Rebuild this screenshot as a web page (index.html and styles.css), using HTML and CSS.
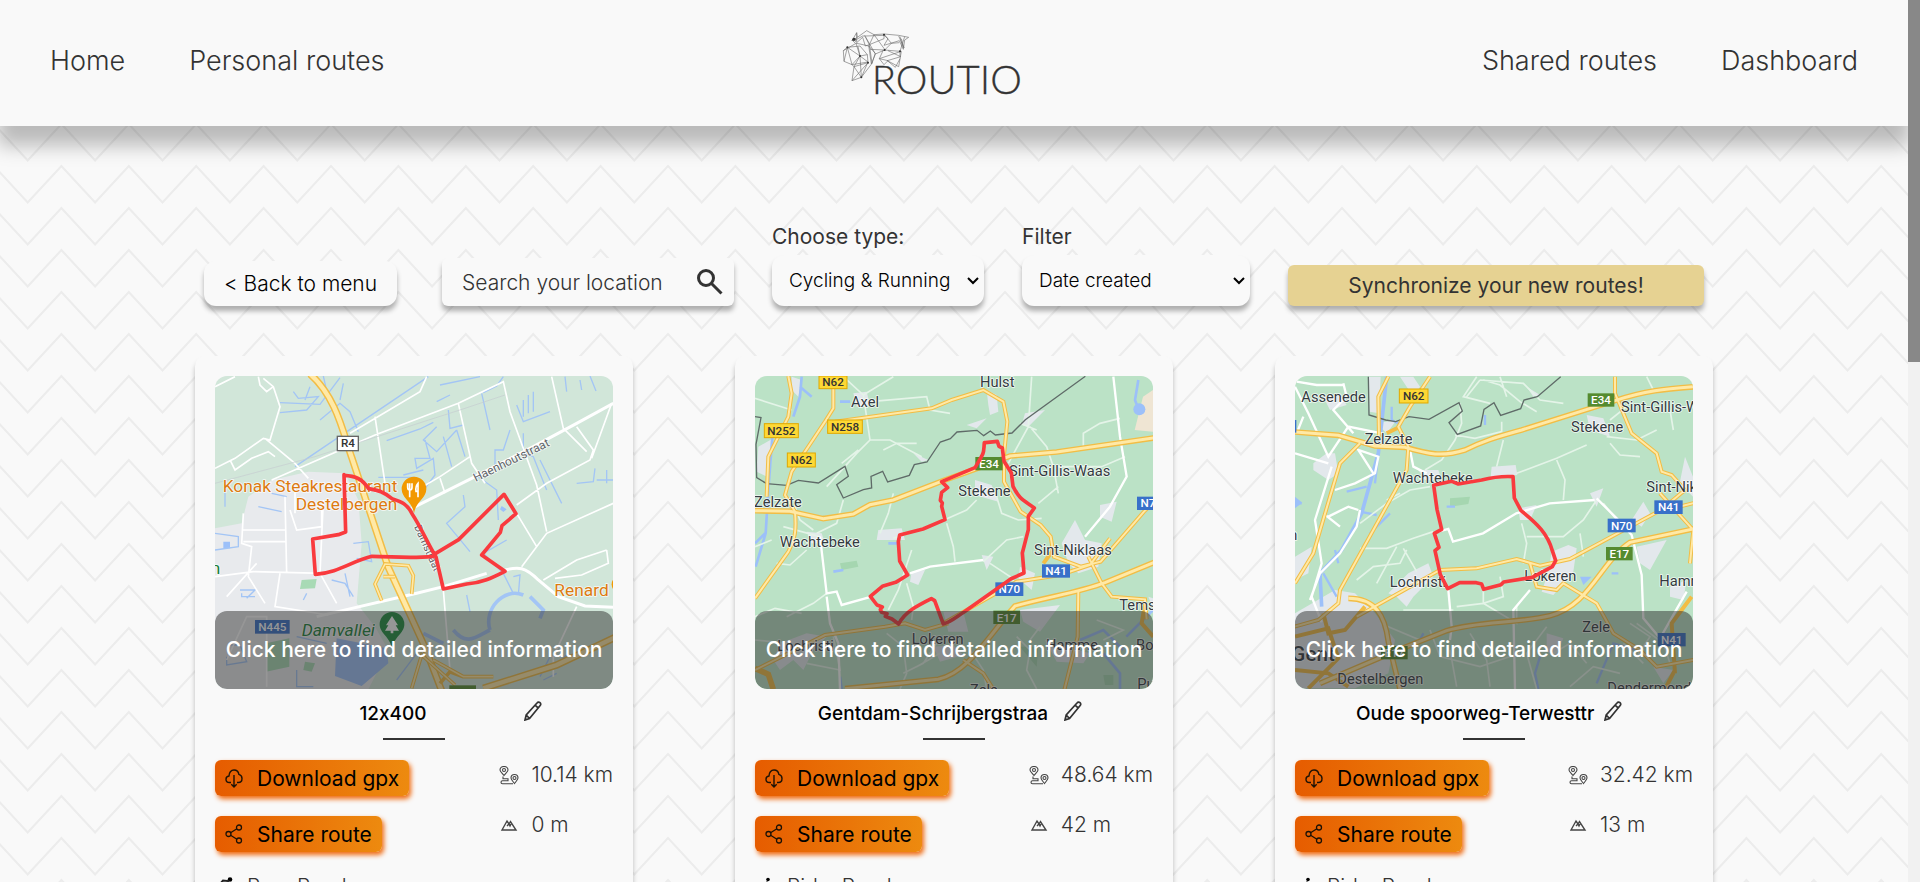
FILE: index.html
```html
<!DOCTYPE html>
<html lang="en">
<head>
<meta charset="utf-8">
<title>Routio</title>
<meta name="viewport" content="width=device-width, initial-scale=1">
<link rel="stylesheet" href="styles.css">
</head>
<body>
<svg class="sprite" aria-hidden="true">
  <symbol id="i-pencil" viewBox="0 0 18 20"><path d="M1 19l1.200-5L13 2c1-1.200 2-1.200 3-.3s1 2 0 3L5.500 17.500zM11 4.200l3.300 2.800M2.200 14l3.300 3.500" fill="none" stroke="#333" stroke-width="1.700"/></symbol>
  <symbol id="i-download" viewBox="0 0 18 19"><path d="M6 13.500H4.500C2.500 13.500 1 12 1 10.200s1.300-3 3-3.200C4 3.500 6 1 9 1c2.800 0 4.500 1.800 4.900 4.400C16 6 17 7.500 17 9.500c0 2.300-1.300 4-3.500 4H12M9 6v12M6.300 15.300L9 18l2.700-2.700" fill="none" stroke="#1d1206" stroke-width="1.400"/></symbol>
  <symbol id="i-share" viewBox="0 0 18 20"><g fill="none" stroke="#1d1206" stroke-width="1.300"><circle cx="3.500" cy="10" r="2.500"/><circle cx="14" cy="3.500" r="2.500"/><circle cx="14" cy="16.500" r="2.500"/><path d="M5.600 8.700l6.300-3.900M5.600 11.300l6.300 3.900"/></g></symbol>
  <symbol id="i-distance" viewBox="0 0 20 19"><g fill="none" stroke="#444" stroke-width="1.100"><path d="M5 9.500C3 7 1 5.500 1 4a4 3.500 0 0 1 8 0c0 1.500-2 3-4 5.500zM15.500 17.500c-2-2.500-3.500-4-3.500-5.500a3.500 3.500 0 0 1 7 0c0 1.500-1.500 3-3.500 5.500z"/><circle cx="5" cy="4" r="1.500"/><circle cx="15.500" cy="12" r="1.500"/><path d="M4 10.500v2.200h5v2H3.500c-2 0-2 3 0 3H14"/></g></symbol>
  <symbol id="i-climb" viewBox="0 0 16 12"><path d="M1 11L6 2l2 3 1.500-2.500L15 11zM6 7l2-2 1 2 1-2" fill="none" stroke="#444" stroke-width="1.400"/></symbol>
  <symbol id="i-run" viewBox="0 0 18 20"><circle cx="13" cy="2.500" r="2.300"/><path d="M3 7l3-3.500 5 .5-3 6 3 3-1 6M8 10l-2 4-5 1M11 5l2 3h4" fill="none" stroke="#222" stroke-width="2"/></symbol>
  <symbol id="i-ride" viewBox="0 0 18 20"><circle cx="11" cy="2.500" r="1.800"/><g fill="none" stroke="#222" stroke-width="1.400"><circle cx="4" cy="15" r="3.300"/><circle cx="14" cy="15" r="3.300"/><path d="M9 15v-4L6 9l4-4 2 3h3"/></g></symbol>
</svg>
<div class="page">
  <header class="header">
    <nav class="nav"><a href="#">Home</a><a href="#">Personal routes</a></nav>
    <a class="logo" href="#" aria-label="Routio">
      <svg viewBox="118 86 549 198" width="183" height="66">
        <g fill="none" stroke="#666" stroke-width="1.800">
          <path d="M148 118l14-24 2 14 28-20 22 12 30-2 44 4 30 6-12 8-4 28-12-26-46 14 12-20-12-10-54 2-10 0-18 10-6 10-8-8zM162 94v30M164 108l-16 10M180 108l8 26M162 124l18-16M214 100l32 44M186 102l14 28 44-18 0-14M188 134l12-4 2 14 44 2M202 130l-14-24M200 130l14-30M244 98l22 28-20 20M266 126l24-2M246 146l46 4 14-44M246 146l-28 12-16-28M218 158l-12 30-8-56M288 104l16 36-8-28M292 106l8 30M242 146l-12 26 14 18 12-12-26-6M230 172l66-22-8 46-34-18 40-12-38-18M254 178l24 20 14-26M292 150l0 16"/>
          <path d="M160 126l-38 22 2 32 24 10 6 6-6 42 28-10 32-42 10-30-20-22-26-6zM134 138l38 26-24 26M122 148l12-10 38-4 22 26-22 4-12-38M134 138l14 52M124 180l10-42M154 196l18-32-6-28M154 196l22 32-4-64 24 18-20 46M154 196l42-12-2-24M196 184l-48 54M148 190l48-8M202 144l6 42"/>
        </g>
        <g fill="#333"><circle cx="134" cy="138" r="3"/><circle cx="172" cy="164" r="3"/><circle cx="246" cy="146" r="3"/><circle cx="196" cy="184" r="3"/><circle cx="176" cy="228" r="3"/><circle cx="154" cy="114" r="5"/><circle cx="292" cy="150" r="3"/><circle cx="244" cy="100" r="3"/></g>
        <text class="logo-text" x="207" y="279">ROUTIO</text>
      </svg>
    </a>
    <nav class="nav"><a href="#">Shared routes</a><a href="#">Dashboard</a></nav>
  </header>
  <main class="main">
    <form class="toolbar">
      <button class="back" type="button">&lt; Back to menu</button>
      <div class="search">
        <input type="text" placeholder="Search your location" aria-label="Search your location">
        <button type="button" aria-label="Search"><svg viewBox="0 0 26 26" width="26" height="26"><g fill="none" stroke="#333" stroke-width="3"><circle cx="9" cy="9" r="7.500"/><path d="M14.500 14.500l10 10"/></g></svg></button>
      </div>
      <div class="field type"><label for="type">Choose type:</label><select id="type"><option>Cycling &amp; Running</option><option>Cycling</option><option>Running</option></select></div>
      <div class="field filter"><label for="filter">Filter</label><select id="filter"><option>Date created</option><option>Distance</option></select></div>
      <button class="sync" type="button">Synchronize your new routes!</button>
    </form>
    <div class="cards">
      <article class="card">
        <a class="map" href="#">
          <svg viewBox="75 78 1194 940" preserveAspectRatio="xMidYMid slice">
            <rect x="75" y="78" width="1194" height="940" fill="#d1e6d9"/>
            <path d="M75 535l80-15 20-80 70-50 110-25 110 5 40 80 10 130-15 180 55 70 40 70-60 118H75z" fill="#e8eaed"/>
            <path d="M335 690l45-3-5 28-45 2zM228 880l70-15v85l-70 15zM345 935l30 5-10 25-25-5z" fill="#a8dab5"/>
            <path d="M440 865l150 30 5 45-80 68-80-30zM100 575h20v20h-20zM935 468l15 10-10 8-10-8z" fill="#9cc0f9"/>
            <g fill="none" stroke="#a3c5f5" stroke-width="4">
              <path d="M270 188l80-8 35-40-60 5-15-20M270 158l120 5 60-80M360 110l-15 40M390 210l60-50 30 25 25 60M460 100l-10 50M400 78l18 80M315 350l400-270M590 272l100-35 40-20M705 270l15 55-45 0 5 30 50-30 5 50-30 40M640 375l60-15M565 382l110 0M740 230l-40 40 40 35 60-65M760 260l25 90M800 240l25 80M750 105l120-25M740 155l40-20M775 180l5 55 40-10M875 130l25 110M880 128l40-20 20-28M1000 150v50M1015 135v55M1030 125v60M980 165l20 50 80-30M960 240l-20 60-25 0 0 50M1000 250l0 60 30 10 40 100M1050 330l40 80 25 50M1125 80l5 45M1170 90l5 30M1200 78l18 45M850 370l70 50 5 90M820 435l5 35-55 50 70 85M1160 400l50-5 5-40M1250 360l0 40M1220 390l50 0M950 570l-70 40 60 60 30 60M490 580l45-5 10 60-45-10M105 410l0 60M205 470l70 15M290 440l-45-10M75 550l70 10 0 30-70 10M155 730v10h40M150 720h45l-25 25M350 730l-10 20M425 690l40 10 25 40M465 670l15 70M970 680l20-5-5 60M830 735l10 50M120 885l30 0 20 50-60 10 0-25M1050 980l30-60M1080 960l50-45M1060 990l40-20M320 860l90 20M320 960v50h50M620 990l60-80"/>
              <path d="M900 840c-20-60 40-130 100-105M1020 740l40 40-10 25M700 850l60 30M790 840c40 50 70 20 110 0" stroke-width="11"/>
            </g>
            <g fill="none" stroke="#fff" stroke-width="5">
              <path d="M75 355l60-30 85-60 20 5 30-100-20-60-30-25M75 110l60-30M205 80l5 25 20 20 20-15M120 330l15 30 50-35 50-20 20 15M225 265l90 75 40 45M245 390l310-135 250-95 135-65M480 250l210-125 20-45M555 200l30 200M805 160l40 180 40 60M805 160l135-65 20 90 80 220 30 140M1085 80l35 155 70 70M1160 230l50 70-10 30-130 70-90 65M1265 160l-60 165M840 320l-90 60-60 35M750 385l15 45M1270 460l-200 90-75 100M980 490l60 100M1060 690l100-60 90-30M1250 600l5 40-80 35-80 10M760 720l20 240M1160 770l-70 150 0 60M75 680l115-15 210 5M160 490l-5 90 30 10-10 90 50 80M155 540h130M160 575h130M285 440l5 230M300 480l20 60 75-10v-50M315 410v80M400 450l-10 220 50 90M270 670l-15 100 160 25M200 640l-90 100M110 930l60-130 60 0v210"/>
              <path d="M665 475l180-90 185-95 130-70 110-60M380 800l300-70 80-20 130-40M945 660c40-10 60-10 100 30l60 50 80 28 84 4" stroke-width="9"/>
            </g>
            <path d="M75 400l300-80 450-145 120-40" fill="none" stroke="#c5ccd0" stroke-width="2"/>
            <g fill="none" stroke="#f2bd45" stroke-width="22"><path d="M360 72c80 70 100 180 125 250l110 330 110 240 50 130M880 1015l220-70 180-85"/></g>
            <g fill="none" stroke="#ffe9a6" stroke-width="13"><path d="M360 72c80 70 100 180 125 250l110 330 110 240 50 130M880 1015l220-70 180-85"/></g>
            <g fill="none" stroke="#f2bd45" stroke-width="11"><path d="M575 752l-20-50 30-60 70 5 15 30-5 55M580 680h35M665 1015l30-100 100 90M730 930l90 50 90 0M750 1000l30-35 40 15"/></g>
            <g fill="none" stroke="#ffe9a6" stroke-width="5"><path d="M575 752l-20-50 30-60 70 5 15 30-5 55M580 680h35M665 1015l30-100 100 90M730 930l90 50 90 0"/></g>
            <g class="place poi"><text x="98" y="427">Konak Steakrestaurant</text><text x="317" y="481">Destelbergen</text><text x="1093" y="738">Renard</text></g>
            <text class="place street" transform="translate(857 396) rotate(-26)">Haenhoutstraat</text>
            <text class="place street small" transform="translate(672 530) rotate(66)">Damstraat</text>
            <path d="M672 490c-5-35-37-45-37-73a37 37 0 0 1 74 0c0 28-32 38-37 73z" fill="#f29900"/><path d="M653 400v12q0 8 6 8v22M659 400v18M666 400v12q0 8-6 8M684 442v-42q-8 8-6 24h6" fill="none" stroke="#fff" stroke-width="5"/>
            <circle cx="1290" cy="703" r="25" fill="#f29900"/>
            <rect x="442" y="259" width="63" height="43" fill="#fff" stroke="#666" stroke-width="4"/><text class="shield dark" x="474" y="291">R4</text>
            <rect x="195" y="810" width="104" height="41" fill="#3870c9"/><text class="shield" x="247" y="843">N445</text>
            <rect x="778" y="1006" width="80" height="40" fill="#558b2f"/>
            <text class="place park" x="335" y="858">Damvallei</text><text class="place park plain" x="62" y="672">n</text>
            <path d="M606 896c-5-35-37-45-37-73a37 37 0 0 1 74 0c0 28-32 38-37 73z" fill="#1e8e3e"/><path d="M606 798l18 28h-7l10 16h-17v8h-8v-8h-17l10-16h-7z" fill="#fff"/>
            <path class="route" d="M462 374l5 172-22 8-77 13 8 106c70-5 110-40 170-54 60 0 110 8 182 0l8-8 70-42 136-136 36 58-42 36-5 20-56 68 70 49c-40 20-70 35-115 38l-70 15-22-96c-25-40-45-90-72-130-15-30-30-35-60-45-25-20-40-25-70-30-20-30-40-38-74-40z"/>
          </svg>
          <span class="caption">Click here to find detailed information</span>
        </a>
        <div class="title-row"><h2>12x400</h2><button type="button" aria-label="Rename route"><svg width="18" height="20"><use href="#i-pencil"/></svg></button></div>
        <hr>
        <div class="details">
          <div class="actions">
            <button class="action" type="button"><svg width="18" height="19"><use href="#i-download"/></svg>Download gpx</button>
            <button class="action" type="button"><svg width="18" height="20"><use href="#i-share"/></svg>Share route</button>
            <p class="kind"><svg width="18" height="20"><use href="#i-run"/></svg>Run: Road</p>
          </div>
          <div class="stats"><p><svg width="20" height="19"><use href="#i-distance"/></svg>10.14 km</p><p><svg width="20" height="12"><use href="#i-climb"/></svg>0 m</p></div>
        </div>
      </article>
      <article class="card">
        <a class="map" href="#">
          <svg viewBox="75 78 1194 940" preserveAspectRatio="xMidYMid slice">
            <rect x="75" y="78" width="1194" height="940" fill="#bbe2c6"/>
            <path d="M1269 120l-30 20-25 100 55 5z" fill="#efe5d3"/>
            <path d="M185 80l30 10-10 50-20-20zM85 290l45-25-10 120-40-20zM370 130l40-5 10 40-40 5zM770 120l30 15 5 50-25 10-5-30zM885 190l60-10-50 50-20-5zM710 225l60-20-30 30zM550 310l45 20-20 5zM735 390l50 15 20 50-70-20zM445 540l70-5 10 35-85 0zM1110 465l50-10-15 60-35-15zM1035 510l30 60 50 10-10 70-60 20-30-30-20-60zM545 665l40-5-20 45-25-10zM755 615l35 5-20 40zM870 650l45 20-10 50-40-35zM870 780l120-15-60 80-50-30zM640 785l60 0 15 60-60 0zM150 880l80-30 60 10-40 40-30 60-30-30-40 30-20-30zM610 890l60-5 30 30-70 20zM945 870l60 20 75 20-20 30-80-5zM230 545l45 5 10 30-40 0zM1255 740l14 5v30z" fill="#e3e8ec"/>
            <path d="M330 640l50-8 5 18-50 10zM1120 975l30 0v30h-25zM870 890l50 60 5-60z" fill="#a5d6b0"/>
            <g fill="none" stroke="#9cc0f9" stroke-width="8"><path d="M215 80l-5 60-20 60M210 110l35 30M130 220l-15 200-8 130-30 100M75 580l30-30M330 155l30 0M1180 900l-60-60-70 30M1120 910l50 60v48M1269 780l-80 80M1225 90l-10 60 15 40M330 980l5 38M310 665l30-5M475 580h30"/></g>
            <ellipse cx="1228" cy="178" rx="18" ry="18" fill="#9cc0f9"/>
            <g fill="none" stroke="#e4f4e8" stroke-width="5"><path d="M75 145l110 35M340 80l60 55 90-55M400 135l20 135-40 40-90 100M420 155l170-15 10 40 60 10M420 270l60 0 95 50M460 300l40-20 60 0M385 300l-50 40M905 80l-10 150-60 110M900 230l50 60 20 60 15 80M985 350l130 0 70-30M1060 290v-40l50-30 60-15M870 220l50 20M985 410l-60 50M740 450l-30 30-90 40-130 45M650 520l20 70 5 45M800 440l15 50 50 20 70-5M880 560l-50 10-70 65M75 590l50-20M160 530l110 30 5 35M340 450l-20 70-60 30M230 600l-50 45-40-5M490 430l-15 60-25 60M545 600l-40 120-30 60M75 800l60-25 80 15M170 800l80-40 40-30M530 700l20 70-5 40M780 640l60 40 30 40M250 540l-40-30-15-40M470 850l50 40 10 80-20 47M720 900l40 60 10 57M560 950l70-40M620 880l-40 60-60 30M860 860l40 40-10 60 30 57M930 830l-30 40M1100 810l80 30-60 30M75 870l100 10M230 940l100 20-20-100"/></g>
            <g fill="none" stroke="#fff" stroke-width="7"><path d="M1150 80l20 180 20 120-50 90-75 90M270 560l20 170 30-5 15 40 90-25M540 670l60-20 160-20M290 740l10 80 25 60 5 137"/></g>
            <g fill="none" stroke="#5f6b68" stroke-width="4"><path d="M75 200l18 3-15 80 2 100 30 18 60 5 35-15 60 8 80-50 10 30-35 25 20 40 60-25 25-5-2-35 35-15 15 32 65-20 15-32 38-8 40-60 30-10 20-20 60-5 20 16 20-14 15 12 50-6 40-40 180-130"/></g>
            <g fill="none" stroke="#f2bd45" stroke-width="17"><path d="M75 482l105 2 100 22 90-14 50-28 70-14 150-58 100-36 100-38 140-12 290-42M345 1016l280-28c90-20 150-130 230-220 110-30 190-40 270-70l150-62M75 955l40 18 15 45"/></g>
            <g fill="none" stroke="#f2bd45" stroke-width="12"><path d="M75 745l100-140c20-40 25-60 20-120l-30-50 20-70 100-150 25-40v-65M110 440l5-120 60-120 10-70-10-52M315 215l290-40 60-25 95-30 60 35 12 60-10 100 0 80 50 90 60 40 30 35 10 60 80 30 60-15 130-150 20-20M1075 620l40 80 30 40 100 8 5 60M640 820l140-80 80-45 130-20 90-30 60-80M75 960l210-105 180-25 60-10 60 20 70-20M1045 720l-2 140-40 160M700 930l60 40 30 48M1245 760l-10 60 35 40M940 640l30-40"/></g>
            <g fill="none" stroke="#ffe9a6" stroke-width="9"><path d="M75 482l105 2 100 22 90-14 50-28 70-14 150-58 100-36 100-38 140-12 290-42M345 1016l280-28c90-20 150-130 230-220 110-30 190-40 270-70l150-62"/></g>
            <g fill="none" stroke="#ffe9a6" stroke-width="6"><path d="M75 745l100-140c20-40 25-60 20-120l-30-50 20-70 100-150 25-40v-65M110 440l5-120 60-120 10-70-10-52M315 215l290-40 60-25 95-30 60 35 12 60-10 100 0 80 50 90 60 40 30 35 10 60 80 30 60-15 130-150 20-20M1075 620l40 80 30 40 100 8 5 60M640 820l140-80 80-45 130-20 90-30 60-80M75 960l210-105 180-25 60-10 60 20 70-20M1045 720l-2 140-40 160M700 930l60 40 30 48"/></g>
            <g class="place"><text x="750" y="112">Hulst</text><text x="363" y="172">Axel</text><text x="72" y="472">Zelzate</text><text x="149" y="590">Wachtebeke</text><text x="837" y="378">Sint-Gillis-Waas</text><text x="685" y="438">Stekene</text><text x="912" y="616">Sint-Niklaas</text><text x="1168" y="780">Temse</text><text x="545" y="882">Lokeren</text><text x="142" y="902">Lochristi</text><text x="948" y="900">Hamme</text><text x="1218" y="900">Bornem</text><text x="720" y="1034">Zele</text><text x="1222" y="1018">Puurs</text></g>
            <g fill="#fdd835" stroke="#e0a800" stroke-width="3"><rect x="267" y="78" width="84" height="38"/><rect x="103" y="221" width="102" height="42"/><rect x="293" y="210" width="104" height="40"/><rect x="172" y="309" width="84" height="42"/></g>
            <g class="shield dark"><text x="309" y="108">N62</text><text x="154" y="254">N252</text><text x="345" y="242">N258</text><text x="214" y="342">N62</text></g>
            <g fill="#558b2f"><rect x="736" y="321" width="82" height="40"/><rect x="790" y="782" width="80" height="40"/></g>
            <g fill="#3870c9"><rect x="1221" y="440" width="60" height="40"/><rect x="936" y="643" width="84" height="40"/><rect x="796" y="697" width="84" height="41"/></g>
            <g class="shield"><text x="777" y="354">E34</text><text x="830" y="815">E17</text><text x="1264" y="472">N70</text><text x="978" y="676">N41</text><text x="838" y="730">N70</text></g>
            <path class="route" d="M766 278l36-4 5 15 10 5 5 40 22 35 5 40c20 40 30 40 64 65l-18 25v40l-18 70 5 60-40 18-20 14-120 85c-30 20-40 30-62 36l-26-70-10-6c-40 20-80 40-98 76l-20-15-20-8 5-8-16-4-4-8 6-8-16-6-20-26 36-30 40-12 36-22-24-42-4-58 4-20 70-18 66-28-10-40 2-10-6-8 4-24 18-14-18-18 100-42c30-50 25-40 28-75z"/>
          </svg>
          <span class="caption">Click here to find detailed information</span>
        </a>
        <div class="title-row"><h2>Gentdam-Schrijbergstraa</h2><button type="button" aria-label="Rename route"><svg width="18" height="20"><use href="#i-pencil"/></svg></button></div>
        <hr>
        <div class="details">
          <div class="actions">
            <button class="action" type="button"><svg width="18" height="19"><use href="#i-download"/></svg>Download gpx</button>
            <button class="action" type="button"><svg width="18" height="20"><use href="#i-share"/></svg>Share route</button>
            <p class="kind"><svg width="18" height="20"><use href="#i-ride"/></svg>Ride: Road</p>
          </div>
          <div class="stats"><p><svg width="20" height="19"><use href="#i-distance"/></svg>48.64 km</p><p><svg width="20" height="12"><use href="#i-climb"/></svg>42 m</p></div>
        </div>
      </article>
      <article class="card">
        <a class="map" href="#">
          <svg viewBox="75 78 1194 940" preserveAspectRatio="xMidYMid slice">
            <rect x="75" y="78" width="1194" height="940" fill="#bbe2c6"/>
            <path d="M297 80l35 0-5 110-28-5zM160 140l50-5 20 30-50 15zM390 80l40 60 20-30-20-30zM130 340l40-30 25 0 10 60-30 20-45-30zM320 220l60-10-30 40zM665 350l72-5 5 30-80 5zM445 360l60 0 10 30-50 0zM950 195l50 10 20 55-60-20zM960 430l40-15-20 55zM745 475l55-10-20 45-30 0zM845 605l50-20 25 10-10 70-60 70-35-10 20-60zM1085 510l35-55 20 35-25 40zM1100 590l90-20-50 90-30-20zM1200 710l50-20-10 60-40-10zM1245 320l24 60v60l-40-40zM355 730l60-60 60-30 15 40-60 60-20 30-30-30zM75 620l50-30-10 80-40 20zM75 790l120-70 60 10 60 60 60 80-20 100-100 45H75zM770 110l40 25-20 5zM830 850l50 15-20 50-30-10zM1150 950l60 10-30 40z" fill="#e3e8ec"/>
            <path d="M540 445l60-5-5 22-55 8z" fill="#a5d6b0"/>
            <g fill="none" stroke="#9cc0f9" stroke-width="11"><path d="M350 80l-25 230-50 180-60 110-65 70 5 100"/></g>
            <g fill="none" stroke="#9cc0f9" stroke-width="7"><path d="M325 310l-10 90M230 425l60-15M270 485l50 10M195 600l10 40M160 670l40 70M365 170v40l30 15M75 460h20M645 195v30M530 470h25M810 920l-15 50 10 47M980 1000l50-120 70 20M1025 670l20 0M460 850l-10 20M360 490l-60 60"/></g>
            <path d="M75 440l22 18-22 17zM930 680l35 0-25 25z" fill="#9cc0f9"/>
            <g fill="none" stroke="#e4f4e8" stroke-width="5"><path d="M570 160l5 60-20 50-40 60-50 30M620 80l-40 60 80 20M630 90l-40 50M690 80l20 60M700 270l-20 80M640 90l50 15 60 50 50 30M630 90l130 10 50 50 70 10M555 255l60 10 80-20v-30M740 370l120-45 90-40M860 330l25 60-5 60M1020 280l30 35 60 5M1010 260l90 10 60-30M1070 170l-50 40M1130 80l20 40M1200 180l10 60M270 595h80l80-30 60-20M260 690l50-40 80-10 20-40M400 595l40 70M270 520l80-60 70-40 60-10M350 450l40-20M380 590l-60 110M755 520l15 60-10 60M770 560h110l60-50 40-60M1000 460l40 50M690 680l10 60-60 20-80 10M640 700v60l100 60 0-50M400 780l150 0M330 820l120 50 100-30M480 840l30 80 120 30 120-40M540 900l20 110M600 850l50 80 10 80M830 830l-60 80 30 107M850 910l50-30 50 60M1100 820l80 60 20 60M1100 920l40-60-60-40M900 1010l70-60 80 20M930 550l10 70M1060 880l60 60"/></g>
            <g fill="none" stroke="#fff" stroke-width="7"><path d="M80 95l60 10 80 0M75 110l40 80 60 130 60-90 100 20M185 350l-50 160 20 130-30 100 30 77M270 480l-10 50-50 80-60 60-30 80M75 310l100 30M175 500l60-30 30 10M160 490l50 40M310 370l-45-70 60 20-10 50-60 30-60 20M505 545l30-8 14 38 90-25 100-60 100-30 135-10M980 445l60 60 45 50 30 120 5 130 50 60 80-140M535 720l10 110-5 40M780 720l-50 60 5 237M420 300l10 50 40 20M220 100l10 40-40 40 60 70M100 200l-20 50"/></g>
            <g fill="none" stroke="#5f6b68" stroke-width="4"><path d="M295 80l2 115 50 15 30 5 40-15 60 8 90-50 10 25-40 35 25 35 70-25 10-50 30-20 20 38 60-20 10-26 40-10 70-60"/></g>
            <g fill="none" stroke="#f2bd45" stroke-width="17"><path d="M75 246l130 10 110 32 90 4c70 20 110 30 180 8 60-30 100-40 170-60l280-88c90-30 150-35 240-42M235 745c80 0 110 50 120 130l35 143M150 1000l230-98 150-60c100-30 200-20 310-45 120-30 150-160 240-220l190-40"/></g>
            <g fill="none" stroke="#f2bd45" stroke-width="12"><path d="M355 80l-30 60 2 130M480 80l-60 90-35 60 30 60-5 70-200 360-5 40-60 50-90 25M270 280l-60 60-30 100-50 170-55 90M1035 80v50l50 120 75 60 15 55 30 10 40 45-60 50M260 800l250-140 110-5 120-28 70 20 90-20 130-70 130-70 120-30M780 640l20 70 60 10 20-20 100 60 50 90 80 50 50 50 110-20M1170 430l100 110-10 100M1265 740l-60 80 10 150M75 860l100-25 30 90-90 90M160 790l15 60 50-10 60-70M75 960l100 10 60 40M1215 960l-30 57M350 250l40-20"/></g>
            <g fill="none" stroke="#ffe9a6" stroke-width="9"><path d="M75 246l130 10 110 32 90 4c70 20 110 30 180 8 60-30 100-40 170-60l280-88c90-30 150-35 240-42M235 745c80 0 110 50 120 130l35 143M150 1000l230-98 150-60c100-30 200-20 310-45 120-30 150-160 240-220l190-40"/></g>
            <g fill="none" stroke="#ffe9a6" stroke-width="6"><path d="M355 80l-30 60 2 130M480 80l-60 90-35 60 30 60-5 70-200 360-5 40-60 50-90 25M270 280l-60 60-30 100-50 170-55 90M1035 80v50l50 120 75 60 15 55 30 10 40 45-60 50M260 800l250-140 110-5 120-28 70 20 90-20 130-70 130-70 120-30M780 640l20 70 60 10 20-20 100 60 50 90 80 50 50 50 110-20M1170 430l100 110-10 100"/></g>
            <g class="place"><text x="94" y="155">Assenede</text><text x="284" y="281">Zelzate</text><text x="1053" y="187">Sint-Gillis-Waas</text><text x="903" y="247">Stekene</text><text x="368" y="399">Wachtebeke</text><text x="1129" y="425">Sint-Niklaas</text><text x="359" y="711">Lochristi</text><text x="763" y="692">Lokeren</text><text x="1168" y="708">Hamme</text><text x="937" y="845">Zele</text><text x="202" y="1001">Destelbergen</text><text x="1012" y="1030">Dendermonde</text><text x="58" y="570">n</text><text class="city" x="64" y="932">Gent</text></g>
            <rect x="388" y="117" width="86" height="42" fill="#fdd835" stroke="#e0a800" stroke-width="3"/><text class="shield dark" x="431" y="150">N62</text>
            <g fill="#558b2f"><rect x="953" y="130" width="80" height="40"/><rect x="1008" y="591" width="80" height="40"/><rect x="333" y="888" width="80" height="40"/></g>
            <g fill="#3870c9"><rect x="1153" y="451" width="85" height="41"/><rect x="1013" y="506" width="84" height="41"/><rect x="1163" y="849" width="84" height="40"/><rect x="70" y="210" width="9" height="38"/></g>
            <g class="shield"><text x="993" y="163">E34</text><text x="1048" y="624">E17</text><text x="373" y="921">E17</text><text x="1196" y="484">N41</text><text x="1055" y="539">N70</text><text x="1205" y="882">N41</text></g>
            <path class="route" d="M491 406l54-12 20 8 70-12c40-10 60-12 94-10l4 64 20 38c50 40 80 70 94 120l10 30-10 18-60 32-86 14-8 8-52 14-6-16-16-4-50 0-36 18-22-42-16-72 12-10-14-42 22-12-14-60z"/>
          </svg>
          <span class="caption">Click here to find detailed information</span>
        </a>
        <div class="title-row"><h2>Oude spoorweg-Terwesttr</h2><button type="button" aria-label="Rename route"><svg width="18" height="20"><use href="#i-pencil"/></svg></button></div>
        <hr>
        <div class="details">
          <div class="actions">
            <button class="action" type="button"><svg width="18" height="19"><use href="#i-download"/></svg>Download gpx</button>
            <button class="action" type="button"><svg width="18" height="20"><use href="#i-share"/></svg>Share route</button>
            <p class="kind"><svg width="18" height="20"><use href="#i-ride"/></svg>Ride: Road</p>
          </div>
          <div class="stats"><p><svg width="20" height="19"><use href="#i-distance"/></svg>32.42 km</p><p><svg width="20" height="12"><use href="#i-climb"/></svg>13 m</p></div>
        </div>
      </article>
    </div>
  </main>
</div>
<div class="scrollbar" aria-hidden="true"><div class="thumb"></div></div>
</body>
</html>
```
FILE: styles.css
```css
* { box-sizing: border-box; }

body {
  margin: 0;
  height: 100vh;
  overflow: hidden;
  display: flex;
  background: #f9f9f9;
  color: #333;
  font-family: Inter, "Open Sans", sans-serif;
  font-size: 21px;
  font-feature-settings: "calt" 0;
}

button, input, select { font: inherit; color: inherit; font-feature-settings: inherit; }
button { border: 0; padding: 0; background: none; cursor: pointer; }
h2, p { margin: 0; }
a { color: inherit; text-decoration: none; }

.sprite { position: absolute; width: 0; height: 0; }

.page {
  flex: 1;
  min-width: 0;
  overflow: hidden;
  background: url("data:image/svg+xml,%3Csvg xmlns='http://www.w3.org/2000/svg' width='337' height='42' viewBox='0 0 337 42'%3E%3Cpath d='M-33.7 39.5L0 3L33.7 39.5L67.4 3L101.1 39.5L134.8 3L168.500 39.5L202.2 3L235.900 39.5L269.6 3L303.300 39.5L337 3L370.7 39.5' fill='none' stroke='%23ececec' stroke-width='2.200'/%3E%3C/svg%3E") -6px 37px;
}

.scrollbar { flex: 0 0 12px; background: #f1f1f1; }
.thumb { height: 41%; background: #888; }

.header {
  position: relative;
  display: flex;
  align-items: center;
  justify-content: space-between;
  height: 126px;
  padding: 0 50px;
  background: #f9f9f9;
  box-shadow: 0 18px 18px 2px rgba(0, 0, 0, .25);
}
.nav { display: flex; gap: 64px; font-size: 27px; font-weight: 300; padding-bottom: 6px; }
.logo svg { display: block; }
.logo-text { font-family: Lato, sans-serif; font-weight: 300; font-size: 120px; fill: #333; stroke: #333; stroke-width: 1px; }

.main { max-width: 1518px; margin: 0 auto; padding-top: 96px; }

.toolbar { display: flex; align-items: flex-end; padding: 0 9px; gap: 38px; }
.back, .search, .field select, .sync { box-shadow: 0 5px 5px rgba(0, 0, 0, .3); background: #f9f9f9; }
.back { width: 193px; height: 45px; margin-right: 7px; border-radius: 12px; color: #000; font-weight: 300; }
.search { display: flex; align-items: center; width: 292px; height: 48px; padding: 0 11px 0 20px; border-radius: 6px; }
.search input { flex: 1; min-width: 0; border: 0; padding: 0; background: none; outline: 0; font-weight: 300; }
.search input::placeholder { color: #333; opacity: 1; }
.search svg { display: block; }
.field { display: flex; flex-direction: column; gap: 3px; }
.field label { line-height: 30px; }
.field select {
  appearance: none;
  height: 51px;
  padding: 0 24px 0 17px;
  border: 0;
  border-radius: 12px;
  color: #000;
  font-size: 19px;
  font-weight: 300;
  background: #f9f9f9 url("data:image/svg+xml,%3Csvg xmlns='http://www.w3.org/2000/svg' width='12' height='8'%3E%3Cpath d='M1 1l5 5 5-5' fill='none' stroke='black' stroke-width='2'/%3E%3C/svg%3E") no-repeat right 5px center;
}
.type { width: 212px; }
.filter { width: 228px; }
.sync { flex: 1; height: 41px; border-radius: 6px; background: #e6d292; }

.cards { display: grid; grid-template-columns: repeat(3, 1fr); gap: 102px; margin-top: 50px; }
.card { min-width: 0; padding: 20px 20px 40px; border-radius: 10px; background: #f9f9f9; box-shadow: 0 5px 5px rgba(0, 0, 0, .25); }

.map { position: relative; display: block; overflow: hidden; border-radius: 12px; }
.map svg { display: block; width: 100%; height: auto; }
.caption {
  position: absolute;
  left: 0;
  right: 0;
  bottom: 0;
  height: 78px;
  line-height: 78px;
  border-radius: 12px;
  background: rgba(46, 46, 46, .5);
  color: #fff;
  font-weight: 500;
  text-align: center;
  white-space: nowrap;
}
.place { font-family: Roboto, sans-serif; font-size: 44px; fill: #333a40; stroke: #fff; stroke-width: 5px; stroke-opacity: .8; paint-order: stroke; stroke-linejoin: round; }
.poi { font-size: 52px; fill: #dd7a10; }
.street { fill: #5f6368; font-size: 36px; }
.small { font-size: 32px; }
.park { fill: #188038; font-size: 52px; font-style: italic; }
.plain { font-style: normal; }
.city { font-size: 62px; font-weight: 500; }
.shield { font-family: Roboto, sans-serif; font-size: 35px; font-weight: 500; text-anchor: middle; fill: #fff; }
.dark { fill: #333; }
.route { fill: none; stroke: #f93a3e; stroke-width: 11px; stroke-linejoin: round; }

.title-row { display: flex; align-items: center; justify-content: center; gap: 14px; height: 24px; margin-top: 12px; padding-right: 10px; }
.title-row h2 { width: 234px; text-align: center; white-space: nowrap; color: #000; font-size: 19px; font-weight: 500; }
.title-row button { padding-bottom: 4px; }
.title-row svg { display: block; }
hr { width: 62px; height: 2px; margin: 13px auto 20px; border: 0; background: #333; }

.details { display: flex; justify-content: space-between; align-items: flex-start; }
.actions { display: flex; flex-direction: column; align-items: flex-start; gap: 20px; }
.action {
  display: flex;
  align-items: center;
  gap: 14px;
  height: 36px;
  padding: 0 10px;
  border-radius: 6px;
  background: linear-gradient(90deg, #e65c00, #ed8a0f);
  box-shadow: 2px 3px 5px #f06a10;
  color: #000;
}
.kind { display: flex; align-items: center; gap: 12px; padding-left: 2px; font-weight: 300; line-height: 30px; }
.stats { display: grid; gap: 20px; font-weight: 300; }
.stats p { display: flex; align-items: center; gap: 12px; line-height: 30px; }
```
